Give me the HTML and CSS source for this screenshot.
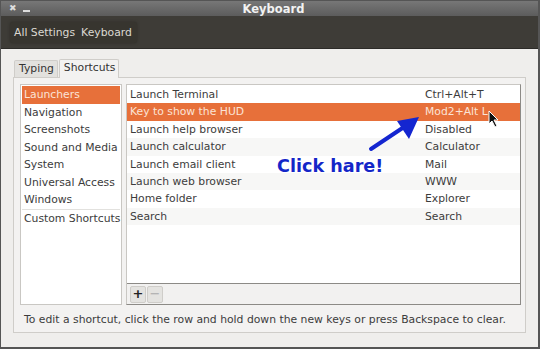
FILE: index.html
```html
<!DOCTYPE html>
<html>
<head>
  <title>Keyboard</title>
  <link rel="stylesheet" href="styles.css">
</head>
<body>
  <div class="window">
    <div class="titlebar">
      <div class="wm-buttons">
        <span class="wm-close">&#10006;</span>
        <span class="wm-min"></span>
      </div>
      <div class="title">Keyboard</div>
    </div>

    <div class="toolbar">
      <div class="crumbs">
        <span class="crumb">All Settings</span>
        <span class="crumb">Keyboard</span>
      </div>
    </div>

    <div class="content">
      <div class="tabs">
        <div class="tab">Typing</div>
        <div class="tab active">Shortcuts</div>
      </div>

      <div class="panel">
        <div class="lists">
          <ul class="categories">
            <li class="selected">Launchers</li>
            <li>Navigation</li>
            <li>Screenshots</li>
            <li>Sound and Media</li>
            <li>System</li>
            <li>Universal Access</li>
            <li>Windows</li>
            <li class="custom">Custom Shortcuts</li>
          </ul>

          <div class="shortcuts">
            <div class="rows">
              <div class="row"><span class="name">Launch Terminal</span><span class="keys">Ctrl+Alt+T</span></div>
              <div class="row selected"><span class="name">Key to show the HUD</span><span class="keys">Mod2+Alt L</span></div>
              <div class="row"><span class="name">Launch help browser</span><span class="keys">Disabled</span></div>
              <div class="row"><span class="name">Launch calculator</span><span class="keys">Calculator</span></div>
              <div class="row"><span class="name">Launch email client</span><span class="keys">Mail</span></div>
              <div class="row"><span class="name">Launch web browser</span><span class="keys">WWW</span></div>
              <div class="row"><span class="name">Home folder</span><span class="keys">Explorer</span></div>
              <div class="row"><span class="name">Search</span><span class="keys">Search</span></div>
            </div>
            <div class="list-tools">
              <span class="tool">+</span>
              <span class="tool dim">&minus;</span>
            </div>
          </div>
        </div>

        <p class="hint">To edit a shortcut, click the row and hold down the new keys or press Backspace to clear.</p>
      </div>
    </div>

    <!-- annotation drawn over the screenshot -->
    <svg class="arrow" width="60" height="40" viewBox="0 0 60 40">
      <line x1="4" y1="36" x2="40" y2="12" stroke="#1426d0" stroke-width="4" stroke-linecap="round" />
      <polygon points="52,4 30,8 42,26" fill="#1426d0" />
    </svg>
    <div class="callout">Click hare!</div>

    <svg class="cursor" width="12" height="18" viewBox="0 0 12 18">
      <polygon points="1,1 1,14 4,11 7,17 9,16 6,10 10,10" fill="#111" stroke="#fff" stroke-width="1" />
    </svg>
  </div>
</body>
</html>
```

FILE: styles.css
```css
body {
  margin: 0;
  font-family: "DejaVu Sans", sans-serif;
  font-size: 10.8px;
  background: #5a5a5a;
}

.window {
  position: relative;
  width: 540px;
  height: 349px;
  box-sizing: border-box;
  border: 1px solid #555;
  border-right-width: 2px;
  border-bottom-width: 2px;
  background: #efeeec;
  overflow: hidden;
}

.titlebar {
  position: relative;
  height: 15px;
  background: linear-gradient(#777, #5c5c5c);
  color: #f2f2f2;
  display: flex;
  align-items: center;
  justify-content: center;
}

.wm-buttons {
  position: absolute;
  left: 8px;
  top: 2px;
  display: flex;
  align-items: center;
  gap: 6px;
}

.wm-close {
  font-size: 9px;
  color: #ddd;
}

.wm-min {
  display: inline-block;
  width: 7px;
  height: 2px;
  background: #ddd;
  margin-top: 5px;
}

.title {
  font-weight: bold;
  font-size: 11.5px;
  margin-left: 8px;
}

.toolbar {
  height: 32px;
  background: #3e3c37;
  border-bottom: 1px solid #2c2b28;
  display: flex;
  align-items: center;
  padding-left: 9px;
}

.crumbs {
  display: flex;
  gap: 3px;
  background: #37352f;
  border-radius: 3px;
  box-shadow: 0 0 3px #2e2c28;
  padding: 4px 3px;
}

.crumb {
  color: #dcd9d2;
  padding: 0 2px 0 1px;
}

.content {
  padding: 10px 10px 0 12px;
}

.tabs {
  display: flex;
  align-items: flex-end;
  gap: 1px;
  padding-left: 1px;
  height: 18px;
}

.tab {
  background: #e2e1de;
  border: 1px solid #cfcdc9;
  border-bottom: none;
  padding: 1px 3px 0 4px;
  height: 15px;
  color: #333;
  border-radius: 2px 2px 0 0;
}

.tab.active {
  background: #f3f2f1;
  height: 17px;
  padding-top: 1px;
  position: relative;
  top: 1px;
}

.panel {
  background: #f3f2f1;
  border: 1px solid #cfcdc9;
  width: 513px;
  height: 256px;
  box-sizing: border-box;
  padding: 6px 4px 0 6px;
}

.lists {
  display: flex;
  gap: 4px;
  height: 221px;
}

.categories {
  list-style: none;
  margin: 0;
  padding: 1px;
  width: 102px;
  box-sizing: border-box;
  background: #fff;
  border: 1px solid #c9c7c3;
}

.categories li {
  height: 17.5px;
  line-height: 17.5px;
  padding-left: 2px;
  color: #3c3c3c;
  white-space: nowrap;
}

.categories li.selected {
  background: #e7703a;
  color: #fbe3d6;
}

.categories li.custom {
  border-top: 1px solid #e2e1de;
  height: 18px;
  line-height: 17px;
}

.shortcuts {
  flex: 1;
  display: flex;
  flex-direction: column;
  border: 1px solid #8c8a86;
  border-top-color: #c9c7c3;
  border-left-color: #c9c7c3;
}

.rows {
  flex: 1;
  background: #fff;
  padding-top: 1px;
}

.row {
  display: flex;
  height: 17.4px;
  line-height: 17.4px;
  color: #3c3c3c;
}

.row:nth-child(even) {
  background: #f7f7f6;
}

.row.selected {
  background: #e7703a;
  color: #fbe3d6;
}

.name {
  width: 295px;
  padding-left: 3px;
}

.keys {
  flex: 1;
}

.list-tools {
  height: 20px;
  background: #f2f1f0;
  border-top: 1px solid #8c8a86;
  display: flex;
  align-items: center;
  gap: 1px;
  padding-left: 3px;
}

.tool {
  width: 14px;
  height: 15px;
  line-height: 14px;
  text-align: center;
  font-size: 13px;
  font-weight: bold;
  color: #222;
  background: #e4e3e0;
  border: 1px solid #cfcdc9;
  border-radius: 2px;
}

.tool.dim {
  color: #aaa;
  font-weight: normal;
}

.hint {
  margin: 8px 0 0 4px;
  color: #3c3c3c;
  white-space: nowrap;
}

.arrow {
  position: absolute;
  left: 366px;
  top: 112px;
}

.callout {
  position: absolute;
  left: 276px;
  top: 155px;
  font-size: 17.6px;
  font-weight: bold;
  color: #1426c8;
}

.cursor {
  position: absolute;
  left: 487px;
  top: 109px;
}
```
